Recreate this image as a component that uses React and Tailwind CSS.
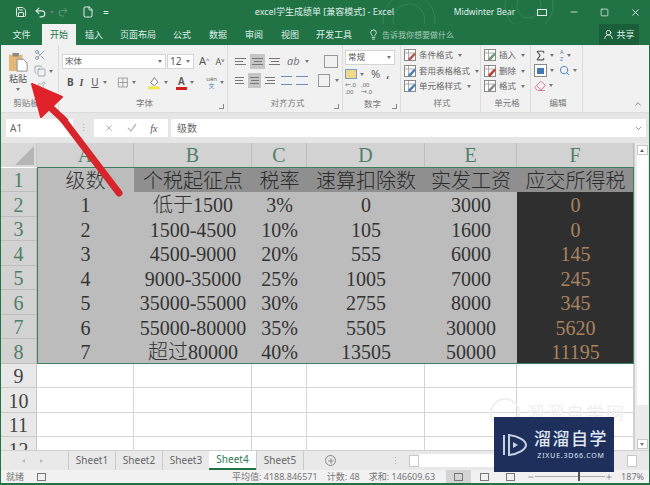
import React from 'react';
import { Save, Undo2, Redo2, File, X, Minus, Square, Lightbulb, UserRound, Scissors, Copy, Paintbrush, ChevronDown, ChevronUp, Sigma, Search, Eraser, Plus } from 'lucide-react';

const ui = "font-['Noto_Sans','Noto_Sans_CJK_SC',sans-serif]";
const sheetFont = "font-['Liberation_Serif','Noto_Sans_CJK_SC',serif] font-light";

const tabs = [
  { label: '插入', w: 'w-[36px]' },
  { label: '页面布局', w: 'w-[52px]' },
  { label: '公式', w: 'w-[36px]' },
  { label: '数据', w: 'w-[36px]' },
  { label: '审阅', w: 'w-[36px]' },
  { label: '视图', w: 'w-[36px]' },
  { label: '开发工具', w: 'w-[52px]' },
];

const columns = ['A', 'B', 'C', 'D', 'E', 'F'];

const rows = [
  ['级数', '个税起征点', '税率', '速算扣除数', '实发工资', '应交所得税'],
  ['1', '低于1500', '3%', '0', '3000', '0'],
  ['2', '1500-4500', '10%', '105', '1600', '0'],
  ['3', '4500-9000', '20%', '555', '6000', '145'],
  ['4', '9000-35000', '25%', '1005', '7000', '245'],
  ['5', '35000-55000', '30%', '2755', '8000', '345'],
  ['6', '55000-80000', '35%', '5505', '30000', '5620'],
  ['7', '超过80000', '40%', '13505', '50000', '11195'],
];

const GroupLabel = ({ children, launcher, className = '' }) => (
  <div className={'mt-auto h-[17px] flex items-center justify-center relative text-[8.5px] text-[#777] ' + className}>
    {children}
    {launcher && <span className="absolute right-[3px] bottom-[3px] w-[5px] h-[5px] border-r border-b border-[#888]" />}
  </div>
);

const Group = ({ className, children }) => (
  <div className={'flex flex-col border-r border-[#dcdcdc] h-full ' + className}>{children}</div>
);

const Caret = () => <span className="w-0 h-0 border-x-[2.5px] border-x-transparent border-t-[3px] border-t-[#777] mx-[3px]" />;

const AlignIcon = ({ active, lines = 'items-center' }) => (
  <span className={'w-[15px] h-[15px] flex flex-col justify-center gap-[2px] px-[2px] ' + lines + (active ? ' bg-[#c6c6c6]' : '')}>
    <i className="block h-px w-full bg-[#777]" />
    <i className="block h-px w-[8px] bg-[#777]" />
    <i className="block h-px w-full bg-[#777]" />
  </span>
);

const StyleIcon = ({ color = '#4a7fb5' }) => (
  <svg width="13" height="13" viewBox="0 0 13 13" className="shrink-0">
    <rect x="0.5" y="0.5" width="11" height="11" fill="#fff" stroke="#888" />
    <path d="M1 4h10M4.5 1v10" stroke="#aaa" />
    <path d="M6 12l6-7-2-1-6 6z" fill={color} />
  </svg>
);

const StyleRow = ({ children, color }) => (
  <div className="h-[15px] flex items-center gap-[2px] text-[8.5px] text-[#666] whitespace-nowrap">
    <StyleIcon color={color} />
    {children}
    <Caret />
  </div>
);

const Ribbon = () => (
  <div className="h-[67px] bg-[#f1f1f1] flex text-[#555] shrink-0">
    <Group className="w-[58px] pl-[4px]">
      <div className="flex">
        <div className="w-[26px] flex flex-col items-center pt-[7px]">
          <svg width="20" height="20" viewBox="0 0 22 22">
            <rect x="1" y="3" width="15" height="18" fill="#e3b777" />
            <rect x="5" y="1" width="7" height="4" fill="#8a8a8a" />
            <path d="M10 8h7l4 4v9H10z" fill="#fff" stroke="#888" />
          </svg>
          <span className="text-[9px] leading-[13px] text-[#555]">粘贴</span>
          <span className="mt-[3px] flex"><Caret /></span>
        </div>
        <div className="flex flex-col gap-[4px] pt-[4px] pl-[3px] text-[#6a7d92]">
          <Scissors size={12} strokeWidth={1.3} />
          <div className="flex items-center"><Copy size={12} strokeWidth={1.2} /><Caret /></div>
          <Paintbrush size={12} strokeWidth={1.3} className="text-[#888]" />
        </div>
      </div>
      <GroupLabel className="w-[42px]">剪贴板</GroupLabel>
    </Group>

    <Group className="w-[169px] pl-[3px]">
      <div className="flex items-center mt-[8px] gap-px">
        <div className="w-[104px] h-[15px] bg-white border border-[#d5d5d5] flex items-center justify-between pl-[2px] text-[8.5px] text-[#555]">宋体<Caret /></div>
        <div className="w-[27px] h-[15px] bg-white border border-[#d5d5d5] flex items-center justify-between pl-[2px] text-[10px] text-[#555]">12<Caret /></div>
        <span className="text-[11px] ml-[4px] text-[#555]">A<sup className="text-[6px]">^</sup></span>
        <span className="text-[9px] ml-[5px] text-[#555]">A<sup className="text-[6px]">v</sup></span>
      </div>
      <div className="flex items-center mt-[5px] pl-[5px] h-[16px] text-[10px] text-[#555]">
        <b className="w-[14px]">B</b>
        <i className="w-[13px] font-['Liberation_Serif',serif] font-bold">I</i>
        <u className="w-[10px]">U</u>
        <Caret />
        <svg width="13" height="13" viewBox="0 0 13 13" className="ml-[7px]"><path d="M1.5 1.5h10v10h-10zM6.5 1.5v10M1.5 6.5h10" fill="none" stroke="#999" /></svg>
        <Caret />
        <svg width="14" height="15" viewBox="0 0 14 15" className="ml-[9px]">
          <path d="M3 8l4-6 4 5-4 4z" fill="#fff" stroke="#777" />
          <rect x="0" y="12" width="13" height="3" fill="#f5e642" />
        </svg>
        <Caret />
        <span className="relative ml-[5px] w-[13px] text-center font-semibold leading-[11px] border-b-[3px] border-[#d02020] text-[#555]">A</span>
        <Caret />
        <span className="ml-[9px] flex flex-col items-center text-[#4a7fb5]">
          <span className="text-[6px] leading-[7px] text-[#666]">uén</span>
          <span className="text-[6px] leading-[7px]">文</span>
        </span>
        <Caret />
      </div>
      <GroupLabel launcher>字体</GroupLabel>
    </Group>

    <Group className="w-[115px] pl-[5px]">
      <div className="flex items-center mt-[8px] gap-[2px]">
        <AlignIcon lines="items-start" />
        <AlignIcon active />
        <AlignIcon />
        <span className="text-[11px] italic text-[#777] ml-[3px]">ab</span>
        <Caret />
        <span className="w-[14px] h-[13px] border border-[#999] ml-[10px]" />
      </div>
      <div className="flex items-center mt-[3px] gap-[2px]">
        <AlignIcon lines="items-start" />
        <AlignIcon active />
        <AlignIcon lines="items-end" />
        <span className="w-[14px] h-[9px] border-y border-[#6b8fb5] ml-[2px]" />
        <span className="w-[14px] h-[9px] border-y border-[#6b8fb5] ml-[2px]" />
        <span className="w-[14px] h-[13px] border border-[#999] ml-[8px]" />
        <Caret />
      </div>
      <GroupLabel launcher>对齐方式</GroupLabel>
    </Group>

    <Group className="w-[58px] pl-[2px]">
      <div className="w-[50px] h-[15px] mt-[5px] bg-white border border-[#d5d5d5] flex items-center justify-between pl-[2px] text-[8.5px] text-[#555]">常规<Caret /></div>
      <div className="flex items-center h-[17px] mt-[1px] text-[11px] text-[#666]">
        <span className="w-[12px] h-[10px] border border-[#7a9cc0] bg-[#f0d98a]" />
        <Caret />
        <span className="ml-[4px]">%</span>
        <span className="ml-[6px] font-bold">,</span>
      </div>
      <div className="flex items-center gap-[5px] text-[6px] leading-[7px] text-[#666]">
        <span>←.0<br />.00</span>
        <span>.00<br />→.0</span>
      </div>
      <GroupLabel launcher>数字</GroupLabel>
    </Group>

    <Group className="w-[80px] pl-[3px]">
      <div className="flex flex-col gap-[0.5px] mt-[3px]">
        <StyleRow color="#b0574a">条件格式</StyleRow>
        <StyleRow>套用表格格式</StyleRow>
        <StyleRow>单元格样式</StyleRow>
      </div>
      <GroupLabel>样式</GroupLabel>
    </Group>

    <Group className="w-[50px] pl-[3px]">
      <div className="flex flex-col gap-[0.5px] mt-[3px]">
        <StyleRow color="#6a9a70">插入</StyleRow>
        <StyleRow color="#c0392b">删除</StyleRow>
        <StyleRow color="#888">格式</StyleRow>
      </div>
      <GroupLabel>单元格</GroupLabel>
    </Group>

    <Group className="w-[52px] pl-[3px]">
      <div className="flex items-center h-[15px] mt-[3px]">
        <Sigma size={13} strokeWidth={2} className="text-[#555]" /><Caret />
        <span className="text-[5.5px] leading-[7px] text-[#4a7fb5] ml-[3px]">A<br />Z</span><Caret />
      </div>
      <div className="flex items-center h-[15px]">
        <span className="w-[13px] h-[13px] border border-[#888] bg-white flex items-center justify-center"><i className="w-[7px] h-[6px] bg-[#3f79b0]" /></span><Caret />
        <Search size={11} strokeWidth={2} className="text-[#4a7fb5] ml-[2px]" /><Caret />
      </div>
      <div className="flex items-center h-[15px]">
        <Eraser size={12} className="text-[#d77a9a]" /><Caret />
      </div>
      <GroupLabel>编辑</GroupLabel>
    </Group>

    <div className="flex-1 flex items-end justify-end pr-[6px] pb-[3px]">
      <ChevronUp size={10} strokeWidth={2} className="text-[#777]" />
    </div>
  </div>
);

const FormulaBar = () => (
  <div className="h-[31px] bg-[#e6e6e6] flex items-center pl-[5px] pr-[3px] gap-[2px] shrink-0 border-t border-[#dcdcdc] text-[#666]">
    <div className="w-[67px] h-[18px] bg-white flex items-center pl-[4px] text-[10px]">A1</div>
    <span className="w-[17px] text-center text-[#aaa] text-[9px]">⋮</span>
    <div className="w-[74px] h-[18px] bg-white flex items-center justify-around px-[4px] text-[#aaa]">
      <X size={10} />
      <svg width="10" height="10" viewBox="0 0 10 10"><path d="M1 5l3 3 5-7" fill="none" stroke="#bbb" strokeWidth="1.4" /></svg>
      <span className="font-['Liberation_Serif',serif] italic text-[10px] text-[#555]">fx</span>
    </div>
    <div className="flex-1 h-[18px] bg-white flex items-center justify-between pl-[6px] pr-[3px] text-[10px] ml-[1px]">
      级数
      <ChevronDown size={9} />
    </div>
  </div>
);

const cellTone = (r, c) => {
  if (r === 0 && c > 0) return 'bg-[#8f8f8f] text-[#2b2b2b]';
  if (c === 5) return 'bg-[#2f2f2f] text-[#a9835f]';
  return 'bg-[#bcbcbc] text-[#333]';
};

const cellBase = 'text-[20px] leading-[24px] flex items-center justify-center pt-[2px] whitespace-nowrap ';

const Sheet = () => (
  <div className={'relative h-[307px] overflow-hidden flex shrink-0 bg-white ' + sheetFont}>
    <div className="w-[633px] grid grid-cols-[36px_97px_118px_55px_118px_92px_117px] auto-rows-[24.5px] content-start">
      <div className="h-[24px] bg-[#d9d9d9] flex items-end justify-end p-[2px] border-r border-[#c8c8c8]">
        <span className="w-0 h-0 border-l-[19px] border-l-transparent border-b-[19px] border-b-[#b5b5b5]" />
      </div>
      {columns.map((c) => (
        <div key={c} className="h-[24px] bg-[#d2d2d2] border-r border-[#bdbdbd] text-[#4f7f67] text-[20px] leading-[24px] text-center">{c}</div>
      ))}
      {rows.map((row, r) => (
        <React.Fragment key={r}>
          <div className={cellBase + 'bg-[#d2d2d2] border-r border-b border-[#bdbdbd] text-[#4f7f67]'}>{r + 1}</div>
          {row.map((v, c) => (
            <div key={c} className={cellBase + cellTone(r, c)}>{v}</div>
          ))}
        </React.Fragment>
      ))}
      {[9, 10, 11, 12].map((n) => (
        <React.Fragment key={n}>
          <div className={cellBase + 'bg-[#e8e8e8] border-r border-b border-[#c8c8c8] text-[#444]'}>{n}</div>
          {columns.map((c) => <div key={c} className="border-r border-b border-[#d4d4d4]" />)}
        </React.Fragment>
      ))}
    </div>
    <div className="absolute left-[36px] top-[24px] w-[597px] h-[197px] border border-[#3f7f5e] pointer-events-none" />
    <div className="flex-1 bg-[#ececec] border-l border-[#cfcfcf] flex flex-col items-center pt-[2px] pb-[1px]">
      <div className="w-[11px] h-[10px] bg-white border border-[#c8c8c8] flex items-center justify-center">
        <span className="w-0 h-0 border-x-[2.5px] border-x-transparent border-b-[3px] border-b-[#666]" />
      </div>
      <div className="w-[11px] h-[250px] bg-white" />
      <div className="mt-auto w-[11px] h-[10px] bg-white border border-[#c8c8c8] flex items-center justify-center"><Caret /></div>
    </div>
  </div>
);

const SheetTabs = () => (
  <div className="h-[20px] bg-[#e9e9e9] flex items-center text-[10px] text-[#666] shrink-0 border-t border-[#d0d0d0]">
    <div className="w-[67px] flex justify-center gap-[15px] pr-[4px]">
      <span className="w-0 h-0 border-y-[2.5px] border-y-transparent border-r-[3px] border-r-[#bbb]" />
      <span className="w-0 h-0 border-y-[2.5px] border-y-transparent border-l-[3px] border-l-[#bbb]" />
    </div>
    {['Sheet1', 'Sheet2', 'Sheet3', 'Sheet4', 'Sheet5'].map((s) => (
      <div
        key={s}
        className={
          'w-[47px] h-full flex items-center justify-center ' +
          (s === 'Sheet4'
            ? 'bg-white text-[#2e7d55] border-b-2 border-[#217346]'
            : 'border-l border-[#c9c9c9]')
        }
      >
        {s}
      </div>
    ))}
    <span className="w-px h-full bg-[#c9c9c9]" />
    <span className="ml-[21px] w-[11px] h-[11px] rounded-full border border-[#888] flex items-center justify-center"><Plus size={8} /></span>
    <span className="ml-[55px] text-[#aaa] text-[9px]">⋮</span>
    <div className="ml-[9px] w-[10px] h-[12px] bg-white border border-[#c8c8c8]" />
    <div className="w-[140px] h-[13px] bg-white" />
    <div className="ml-auto mr-[12px] w-[10px] h-[12px] bg-white border border-[#c8c8c8]" />
  </div>
);

const StatusBar = () => (
  <div className="h-[13px] bg-[#f1f1f1] flex items-center text-[9px] text-[#777] shrink-0 whitespace-nowrap">
    <span className="ml-[5px]">就绪</span>
    <span className="ml-[13px] w-[9px] h-[8px] border border-[#777]" />
    <span className="ml-[186px]">平均值: 4188.846571</span>
    <span className="ml-[9px]">计数: 48</span>
    <span className="ml-[9px]">求和: 146609.63</span>
    <span className="ml-[11px] w-[25px] h-full bg-[#d4d4d4] flex items-center justify-center"><i className="block w-[9px] h-[8px] border border-[#777]" /></span>
    <span className="ml-[9px] w-[9px] h-[8px] border border-[#777]" />
    <span className="ml-[17px] w-[9px] h-[8px] border border-[#777]" />
    <span className="ml-[12px]"><Minus size={8} /></span>
    <span className="w-[70px] h-px bg-[#aaa] relative">
      <i className="absolute left-[43px] -top-[4px] w-[2px] h-[9px] bg-[#555]" />
    </span>
    <Plus size={8} />
    <span className="ml-[8px]">187%</span>
  </div>
);

const App = () => (
  <div className={'relative w-[650px] h-[485px] overflow-hidden bg-[#217346] flex flex-col pl-[1px] pr-[1px] ' + ui}>
    <div className="h-[24px] relative flex items-center text-[#dfeee6] shrink-0 overflow-hidden">
      <svg className="absolute right-[60px] top-0 opacity-10" width="240" height="45" viewBox="0 0 240 45" fill="none" stroke="#fff">
        <circle cx="60" cy="20" r="26" /><circle cx="60" cy="20" r="16" /><circle cx="180" cy="6" r="24" /><circle cx="180" cy="6" r="12" />
      </svg>
      <Save size={12} className="ml-[14px]" />
      <Undo2 size={13} className="ml-[7px]" />
      <Caret />
      <Redo2 size={12} className="text-[#5f9c7d]" />
      <File size={12} className="ml-[13px]" />
      <span className="ml-[9px] text-[10px]">=</span>
      <span className="ml-[146px] text-[9px] w-[199px] whitespace-nowrap">excel学生成绩单 [兼容模式] - Excel</span>
      <span className="text-[8.5px] w-[83px] whitespace-nowrap">Midwinter Bear</span>
      <span className="w-[10px] h-[7px] border border-[#dfeee6]" />
      <Minus size={10} className="ml-[22px]" />
      <Square size={9} className="ml-[21px]" />
      <X size={11} className="ml-[21px]" />
    </div>

    <div className="h-[21px] flex items-center text-[9px] text-[#dfeee6] shrink-0">
      <span className="w-[41px] text-center">文件</span>
      <span className="w-[34px] h-full bg-[#f1f1f1] text-[#217346] flex items-center justify-center">开始</span>
      {tabs.map((t) => <span key={t.label} className={t.w + ' text-center'}>{t.label}</span>)}
      <Lightbulb size={11} className="ml-[8px]" />
      <span className="ml-[3px] text-[8px] text-[#a8cdb9] whitespace-nowrap">告诉我你想要做什么</span>
      <div className="ml-auto mr-[10px] w-[40px] h-full bg-[#1b5e3a] flex items-center justify-center gap-[2px]">
        <UserRound size={11} />共享
      </div>
    </div>

    <Ribbon />
    <FormulaBar />
    <Sheet />
    <SheetTabs />
    <StatusBar />

    {/* faint watermark behind the badge */}
    <div className="absolute left-[490px] top-[398px] flex items-center gap-[6px] text-[#efefef] text-[18px] tracking-[2px] pointer-events-none whitespace-nowrap">
      <span className="w-[30px] h-[30px] rounded-full border-2 border-[#efefef]" />
      溜溜自学网
    </div>

    {/* red arrow over the ribbon */}
    <svg className="absolute left-0 top-0 pointer-events-none" width="140" height="200" viewBox="0 0 140 200">
      <path d="M119 193 L62 118" stroke="#d7262b" strokeWidth="7" strokeLinecap="round" />
      <path d="M32 84 L62 97 L41 117 Z" fill="#e1222a" stroke="#e1222a" strokeWidth="2" strokeLinejoin="round" />
      <path d="M50 107 L66 122" stroke="#d7262b" strokeWidth="7" />
    </svg>

    {/* badge */}
    <div className="absolute left-[494px] top-[417px] w-[120px] h-[55px] bg-[#1f2f5c] flex items-center text-[#dfe6f2]">
      <svg width="28" height="30" viewBox="0 0 28 30" className="ml-[7px]" fill="none" stroke="#c5d2e4" strokeWidth="2">
        <path d="M3 5v20M8 5c10 1 17 6 17 10s-7 9-17 10z" />
        <path d="M12 12l5 3-5 3z" fill="#c5d2e4" stroke="none" />
      </svg>
      <div className="ml-[5px] flex flex-col items-center">
        <span className="text-[17px] leading-[22px] tracking-[1.5px] font-medium">溜溜自学</span>
        <span className="text-[7px] leading-[11px] tracking-[0.8px]">ZIXUE.3D66.COM</span>
      </div>
    </div>
  </div>
);

export default App;
